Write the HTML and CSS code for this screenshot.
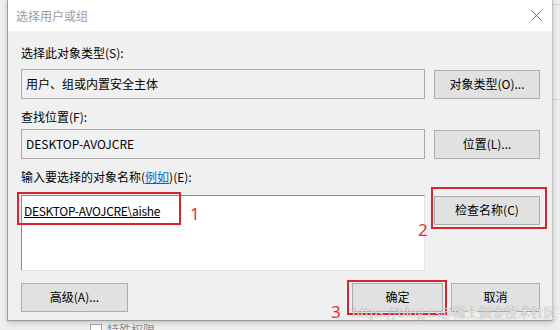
FILE: index.html
```html
<!DOCTYPE html>
<html lang="zh-CN">
<head>
<meta charset="utf-8">
<title>选择用户或组</title>
<link rel="stylesheet" href="styles.css">
</head>
<body>
<div class="desk">
  <div class="dialog">
    <div class="titlebar">
      <span class="title">选择用户或组</span>
      <svg class="close" width="11" height="11" viewBox="0 0 11 11"><path d="M0.5 0.5L10.5 10.5M10.5 0.5L0.5 10.5" stroke="#6e6e6e" stroke-width="1" fill="none"/></svg>
    </div>
    <div class="content">
      <div class="label l1">选择此对象类型(S):</div>
      <div class="row">
        <div class="box">用户、组或内置安全主体</div>
        <div class="btn bt1">对象类型(O)...</div>
      </div>
      <div class="label l2">查找位置(F):</div>
      <div class="row r2">
        <div class="box">DESKTOP-AVOJCRE</div>
        <div class="btn bt1">位置(L)...</div>
      </div>
      <div class="label l3">输入要选择的对象名称(<span class="link">例如</span>)(E):</div>
      <div class="row">
        <div class="area">
          <span class="name">DESKTOP-AVOJCRE\aishe</span>
          <span class="mark m1"></span>
          <span class="num n1">1</span>
        </div>
        <div class="btn bt1 check">检查名称(C)
          <span class="mark m2"></span>
          <span class="num n2">2</span>
        </div>
      </div>
      <div class="footer">
        <div class="btn adv">高级(A)...</div>
        <div class="btn ok">确定
          <span class="mark m3"></span>
          <span class="num n3">3</span>
        </div>
        <div class="btn cancel">取消</div>
      </div>
    </div>
  </div>
  <div class="under"><span class="cb"></span>特殊权限</div>
  <div class="wm">https://blog.cs@稀土掘金技术社区</div>
</div>
</body>
</html>
```
FILE: styles.css
```css
* { box-sizing: border-box; }
html, body { margin: 0; padding: 0; }
body {
  width: 560px;
  height: 330px;
  overflow: hidden;
  background: #ececec;
  font-family: "Noto Sans CJK SC", "Noto Sans", sans-serif;
  font-size: 12px;
  color: #000;
}
.desk {
  position: relative;
  height: 330px;
  padding-left: 7px;
  background:
    linear-gradient(#d4d4d4, #d4d4d4) 553px 4px / 7px 1px no-repeat,
    linear-gradient(#d4d4d4, #d4d4d4) 553px 99px / 7px 1px no-repeat,
    #eeeeee;
}
.dialog {
  width: 546px;
  height: 321px;
  background: #f0f0f0;
  border: 1px solid #9a9a9a;
  border-top: none;
  border-right-color: #c4c4c4;
  box-shadow: 0 2px 5px rgba(0,0,0,0.18);
}
.titlebar {
  height: 31px;
  background: #fff;
  display: flex;
  align-items: center;
  justify-content: space-between;
  padding: 0 10px 0 8px;
}
.title {
  color: #9c9c9c;
  font-size: 12px;
}
.close { display: block; }
.content {
  padding: 14px 12px 0 13px;
}
.label {
  height: 16px;
  line-height: 16px;
}
.l1 { margin-bottom: 8px; }
.l2 { margin-top: 10px; margin-bottom: 4px; }
.l3 { margin-top: 10px; margin-bottom: 10px; }
.link { color: #0066cc; text-decoration: underline; }
.row {
  display: grid;
  grid-template-columns: 404px 106px;
  column-gap: 9px;
  align-items: start;
}
.box {
  height: 30px;
  border: 1px solid #a9a9a9;
  background: #f0f0f0;
  padding-left: 4px;
  line-height: 27px;
}
.btn {
  position: relative;
  height: 29px;
  border: 1px solid #adadad;
  background: #e1e1e1;
  text-align: center;
  line-height: 26px;
}
.bt1 { margin-top: 1px; }
.area {
  position: relative;
  height: 76px;
  background: #fff;
  border: 1px solid #e3e3e3;
  border-top-color: #8c8c8c;
  border-left-color: #8c8c8c;
  padding: 6px 0 0 2px;
  line-height: 18px;
}
.name { text-decoration: underline; letter-spacing: -0.3px; }
.footer {
  display: flex;
  margin-top: 12px;
}
.adv { width: 107px; }
.ok { width: 91px; margin-left: auto; }
.cancel { width: 89px; margin-left: 8px; }
.mark {
  position: absolute;
  border: 2px solid #d42530;
  pointer-events: none;
}
.m1 { left: -5px; top: -4px; width: 164px; height: 33px; }
.m2 { left: -4px; top: -10px; width: 116px; height: 42px; }
.m3 { left: -6px; top: -4px; width: 100px; height: 35px; }
.num {
  position: absolute;
  color: #e0303b;
  font-family: "Noto Sans", sans-serif;
  font-size: 17px;
  line-height: 18px;
}
.n1 { left: 168px; top: 9px; }
.n2 { left: -17px; top: 24px; }
.n3 { left: -22px; top: 19px; }
.under {
  display: flex;
  align-items: center;
  margin-left: 83px;
  margin-top: 2px;
  color: #8a8a8a;
  font-size: 12px;
  line-height: 14px;
}
.cb {
  width: 12px;
  height: 12px;
  border: 1px solid #a0a0a0;
  background: #fff;
  margin-right: 5px;
}
.wm {
  position: absolute;
  left: 352px;
  top: 302px;
  font-size: 13px;
  color: rgba(255,255,255,0.8);
  text-shadow: 0 0 1px rgba(90,90,90,0.8);
  white-space: nowrap;
}
```
